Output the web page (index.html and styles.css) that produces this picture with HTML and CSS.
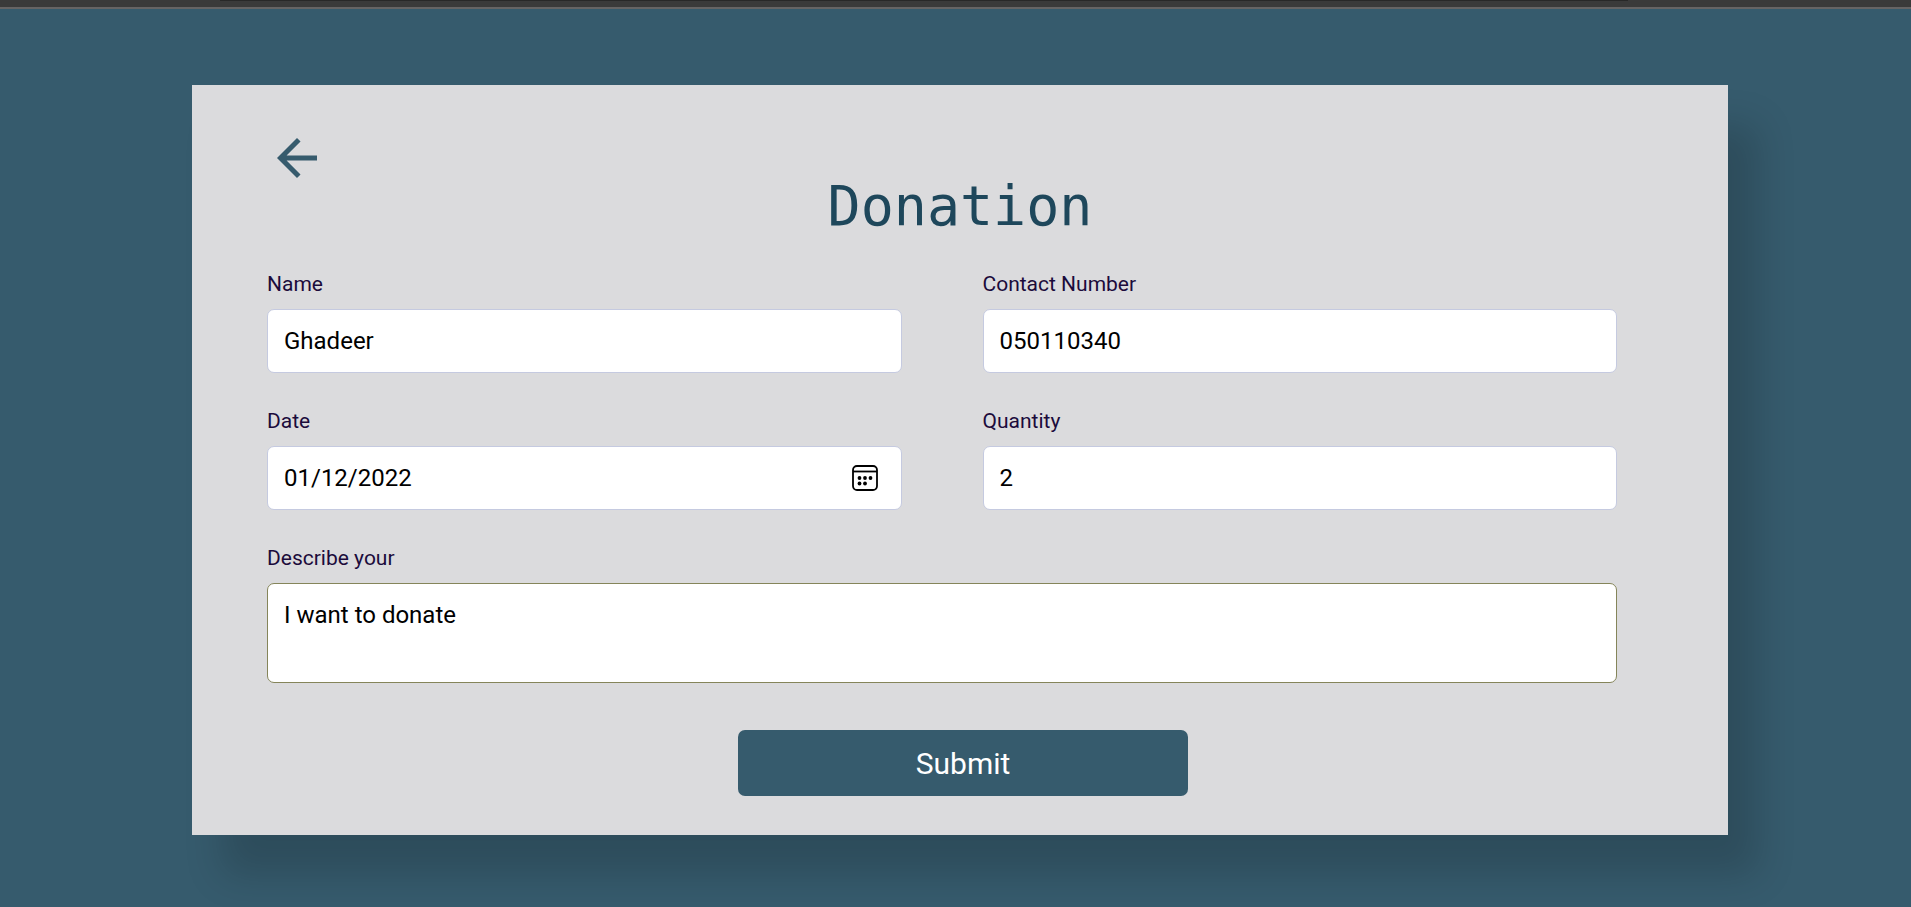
FILE: index.html
```html
<!DOCTYPE html>
<html lang="en">
<head>
<meta charset="utf-8">
<title>Donation</title>
<link rel="stylesheet" href="styles.css">
</head>
<body>
<div class="topbar"></div>
<main class="page">
  <section class="card">
    <header class="card-header">
      <a class="back" href="#" aria-label="Back">
        <svg viewBox="0 0 24 24" width="60" height="60" fill="currentColor"><path d="M20 11H7.83l5.59-5.59L12 4l-8 8 8 8 1.41-1.41L7.83 13H20v-2z"/></svg>
      </a>
      <h1 class="title">Donation</h1>
    </header>
    <form class="form">
      <div class="fields">
        <div class="field">
          <label class="label" for="name">Name</label>
          <input class="input" id="name" type="text" value="Ghadeer">
        </div>
        <div class="field">
          <label class="label" for="contact">Contact Number</label>
          <input class="input" id="contact" type="text" value="050110340">
        </div>
        <div class="field">
          <label class="label" for="date">Date</label>
          <div class="date-box">
            <input class="date-input" id="date" type="text" value="01/12/2022">
            <button class="date-button" type="button" aria-label="Open calendar">
              <svg viewBox="0 0 28 28" width="28" height="28" fill="none" stroke="currentColor" stroke-width="1.8"><rect x="2" y="2" width="24" height="24" rx="4"/><path d="M2 7.500h24"/><g fill="currentColor" stroke="none"><circle cx="8.500" cy="14" r="1.900"/><circle cx="14" cy="14" r="1.900"/><circle cx="19.500" cy="14" r="1.900"/><circle cx="8.500" cy="19.500" r="1.900"/><circle cx="14" cy="19.500" r="1.900"/></g></svg>
            </button>
          </div>
        </div>
        <div class="field">
          <label class="label" for="quantity">Quantity</label>
          <input class="input" id="quantity" type="text" value="2">
        </div>
        <div class="field field-wide">
          <label class="label" for="describe">Describe your</label>
          <textarea class="textarea" id="describe">I want to donate</textarea>
        </div>
      </div>
      <div class="actions">
        <button class="submit" type="submit">Submit</button>
      </div>
    </form>
  </section>
</main>
</body>
</html>
```
FILE: styles.css
```css
* {
  box-sizing: border-box;
}

body {
  margin: 0;
  min-height: 100vh;
  background: #365b6d;
  font-family: Roboto, sans-serif;
  overflow: hidden;
}

.topbar {
  height: 9px;
  padding: 0 283px 0 220px;
  background: #3a3a3a;
  border-bottom: 2px solid #666464;
}

.topbar::before {
  content: "";
  display: block;
  height: 1px;
  background: #282828;
}

.page {
  padding: 76px 183px 72px 192px;
}

.card {
  padding: 43px 0 39px;
  background: #dbdbdd;
  box-shadow: 30px 40px 36px rgba(0, 0, 0, 0.16);
}

.card-header {
  display: grid;
  justify-items: center;
}

.back,
.title {
  grid-area: 1 / 1;
}

.back {
  justify-self: start;
  margin-left: 75px;
  height: 60px;
  color: #365b6d;
}

.back svg,
.date-button svg {
  display: block;
}

.title {
  margin: 48px 0 0;
  color: #1e475b;
  font: 400 55px/60px Consolas, "DejaVu Sans Mono", monospace;
}

.fields {
  display: grid;
  grid-template-columns: 1fr 1fr;
  gap: 36px 81px;
  padding: 36px 111px 0 75px;
}

.field {
  display: flex;
  flex-direction: column;
  gap: 13px;
  min-width: 0;
}

.field-wide {
  grid-column: 1 / -1;
}

.label {
  color: #1b0b3b;
  font-size: 21px;
  line-height: 24px;
}

.input,
.date-box,
.textarea {
  width: 100%;
  border: 1px solid #c5cae0;
  border-radius: 7px;
  background: #fff;
  color: #000;
  font: 24px/30px Roboto, sans-serif;
}

.input,
.date-box {
  height: 64px;
  padding: 0 16px;
}

.date-box {
  display: flex;
  align-items: center;
  padding-right: 22px;
}

.date-input {
  flex: 1;
  min-width: 0;
  padding: 0;
  border: 0;
  background: none;
  color: inherit;
  font: inherit;
}

.date-button {
  padding: 0;
  border: 0;
  background: none;
  color: #000;
}

.textarea {
  display: block;
  height: 100px;
  padding: 16px;
  border-color: #85855a;
  resize: none;
}

.actions {
  display: flex;
  justify-content: center;
  padding: 47px 0 0 6px;
}

.submit {
  width: 450px;
  height: 66px;
  padding: 2px 0 0;
  border: 0;
  border-radius: 7px;
  background: #365b6d;
  color: #fff;
  font: 400 30px/36px Roboto, sans-serif;
}
```
